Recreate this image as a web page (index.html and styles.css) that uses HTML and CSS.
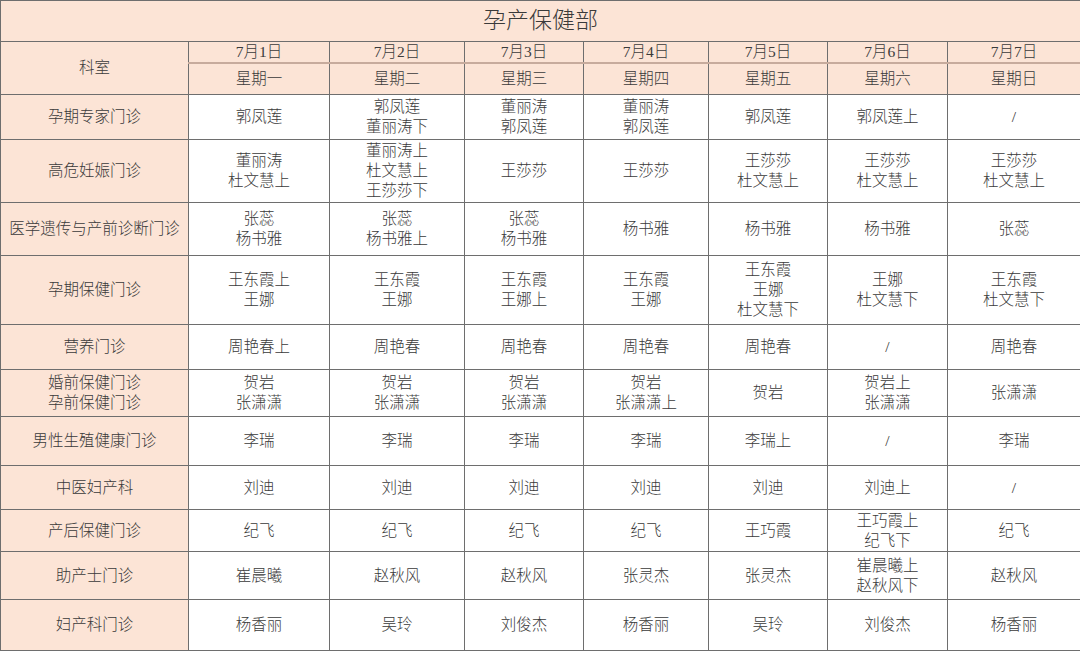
FILE: index.html
```html
<!DOCTYPE html>
<html lang="zh-CN">
<head>
<meta charset="utf-8">
<title>孕产保健部</title>
<link rel="stylesheet" href="styles.css">
</head>
<body>
<table class="schedule">
  <colgroup>
    <col class="c-dept"><col class="c1"><col class="c2"><col class="c3"><col class="c4"><col class="c5"><col class="c6"><col class="c7">
  </colgroup>
  <thead>
    <tr class="r-title"><th colspan="8" class="title">孕产保健部</th></tr>
    <tr class="r-date">
      <th rowspan="2" class="dept-head">科室</th>
      <th class="date">7月1日</th><th class="date">7月2日</th><th class="date">7月3日</th><th class="date">7月4日</th><th class="date">7月5日</th><th class="date">7月6日</th><th class="date">7月7日</th>
    </tr>
    <tr class="r-week">
      <th class="week">星期一</th><th class="week">星期二</th><th class="week">星期三</th><th class="week">星期四</th><th class="week">星期五</th><th class="week">星期六</th><th class="week">星期日</th>
    </tr>
  </thead>
  <tbody>
    <tr class="h45">
      <th class="dept">孕期专家门诊</th>
      <td>郭凤莲</td><td>郭凤莲<br>董丽涛下</td><td>董丽涛<br>郭凤莲</td><td>董丽涛<br>郭凤莲</td><td>郭凤莲</td><td>郭凤莲上</td><td>/</td>
    </tr>
    <tr class="h63">
      <th class="dept">高危妊娠门诊</th>
      <td>董丽涛<br>杜文慧上</td><td>董丽涛上<br>杜文慧上<br>王莎莎下</td><td>王莎莎</td><td>王莎莎</td><td>王莎莎<br>杜文慧上</td><td>王莎莎<br>杜文慧上</td><td>王莎莎<br>杜文慧上</td>
    </tr>
    <tr class="h53">
      <th class="dept">医学遗传与产前诊断门诊</th>
      <td>张蕊<br>杨书雅</td><td>张蕊<br>杨书雅上</td><td>张蕊<br>杨书雅</td><td>杨书雅</td><td>杨书雅</td><td>杨书雅</td><td>张蕊</td>
    </tr>
    <tr class="h69">
      <th class="dept">孕期保健门诊</th>
      <td>王东霞上<br>王娜</td><td>王东霞<br>王娜</td><td>王东霞<br>王娜上</td><td>王东霞<br>王娜</td><td>王东霞<br>王娜<br>杜文慧下</td><td>王娜<br>杜文慧下</td><td>王东霞<br>杜文慧下</td>
    </tr>
    <tr class="h45">
      <th class="dept">营养门诊</th>
      <td>周艳春上</td><td>周艳春</td><td>周艳春</td><td>周艳春</td><td>周艳春</td><td>/</td><td>周艳春</td>
    </tr>
    <tr class="h47">
      <th class="dept">婚前保健门诊<br>孕前保健门诊</th>
      <td>贺岩<br>张潇潇</td><td>贺岩<br>张潇潇</td><td>贺岩<br>张潇潇</td><td>贺岩<br>张潇潇上</td><td>贺岩</td><td>贺岩上<br>张潇潇</td><td>张潇潇</td>
    </tr>
    <tr class="h49">
      <th class="dept">男性生殖健康门诊</th>
      <td>李瑞</td><td>李瑞</td><td>李瑞</td><td>李瑞</td><td>李瑞上</td><td>/</td><td>李瑞</td>
    </tr>
    <tr class="h44">
      <th class="dept">中医妇产科</th>
      <td>刘迪</td><td>刘迪</td><td>刘迪</td><td>刘迪</td><td>刘迪</td><td>刘迪上</td><td>/</td>
    </tr>
    <tr class="h42">
      <th class="dept">产后保健门诊</th>
      <td>纪飞</td><td>纪飞</td><td>纪飞</td><td>纪飞</td><td>王巧霞</td><td>王巧霞上<br>纪飞下</td><td>纪飞</td>
    </tr>
    <tr class="h48">
      <th class="dept">助产士门诊</th>
      <td>崔晨曦</td><td>赵秋风</td><td>赵秋风</td><td>张灵杰</td><td>张灵杰</td><td>崔晨曦上<br>赵秋风下</td><td>赵秋风</td>
    </tr>
    <tr class="h51">
      <th class="dept">妇产科门诊</th>
      <td>杨香丽</td><td>吴玲</td><td>刘俊杰</td><td>杨香丽</td><td>吴玲</td><td>刘俊杰</td><td>杨香丽</td>
    </tr>
  </tbody>
</table>
</body>
</html>
```

FILE: styles.css
```css
html, body {
  margin: 0;
  padding: 0;
  background: #ffffff;
}

body {
  font-family: "Liberation Serif", "Noto Sans CJK SC", serif;
  color: #3a3a3a;
}

.schedule {
  width: 1080px;
  table-layout: fixed;
  border-collapse: collapse;
}

.c-dept { width: 188px; }
.c1 { width: 141px; }
.c2 { width: 135px; }
.c3 { width: 119px; }
.c4 { width: 125px; }
.c5 { width: 119px; }
.c6 { width: 120px; }
.c7 { width: 133px; }

.schedule th,
.schedule td {
  border: 1px solid #6e6e6e;
  padding: 0;
  text-align: center;
  vertical-align: middle;
  font-size: 15.5px;
  line-height: 20px;
  font-weight: 300;
}

.schedule th {
  background: #fce4d6;
}

.schedule td {
  background: #ffffff;
}

.title {
  font-size: 23px !important;
  line-height: 28px !important;
  height: 40px;
}

.r-date th { height: 20px; }
.r-date .date { border-bottom: 2px solid #c7ab9d; }
.r-week th { height: 30px; }

.h42 > * { height: 41px; }
.h44 > * { height: 43px; }
.h45 > * { height: 44px; }
.h47 > * { height: 46px; }
.h48 > * { height: 47px; }
.h49 > * { height: 48px; }
.h51 > * { height: 50px; }
.h53 > * { height: 52px; }
.h63 > * { height: 62px; }
.h69 > * { height: 68px; }
```
